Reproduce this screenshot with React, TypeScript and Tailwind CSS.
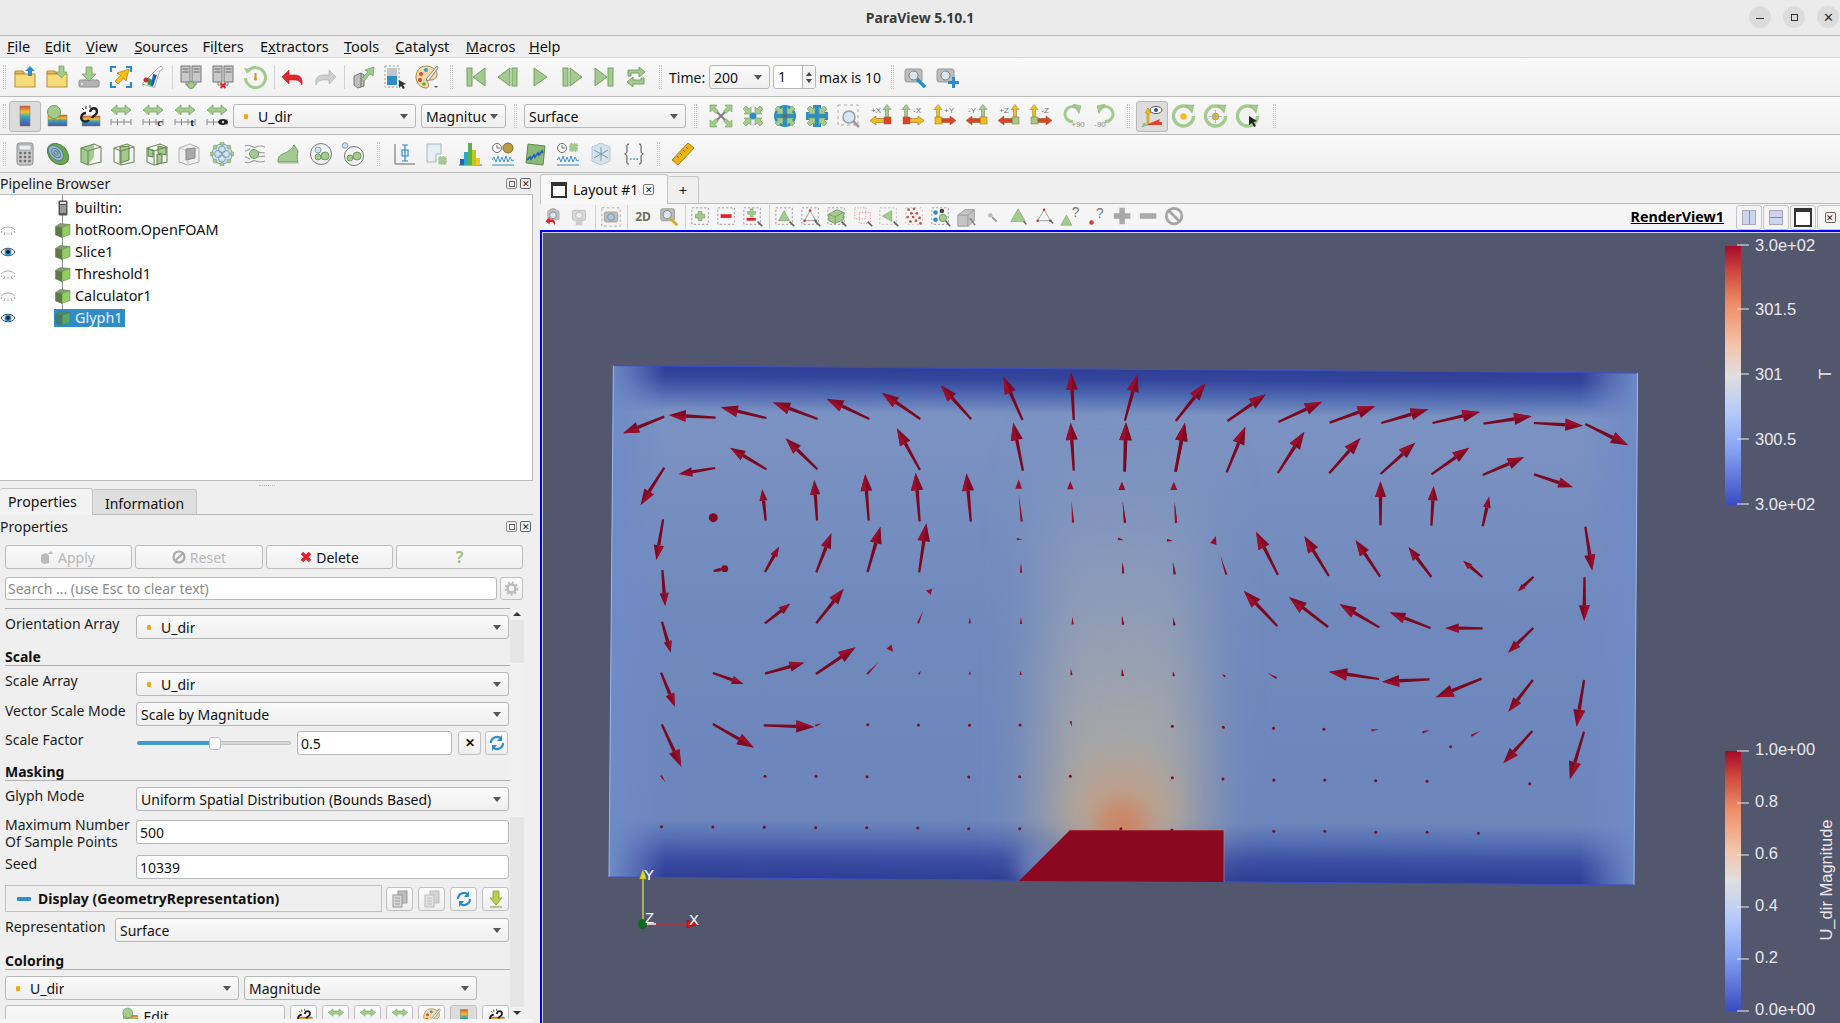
import React from "react";

const G = "#a3cb8f", GS = "#6f9a5d", Y = "#f4bd1c", R = "#e1402b", B = "#2a8cc8", GD = "#7d7d7d";

const Ic = ({ children, s = 24 }: { children?: React.ReactNode; s?: number }) => (
  <svg width={s} height={s} viewBox="0 0 24 24" className="block shrink-0">{children}</svg>
);

const Folder = () => (
  <g>
    <path d="M2 9V6h8l2 3z" fill="#e5b85c" stroke="#b98a3e" />
    <rect x="2" y="9" width="20" height="13" fill="#f6dc78" stroke="#b98a3e" />
  </g>
);
const OpenI = () => <Ic><Folder /><path d="M15 11V6h-3l5-5 5 5h-3v5z" fill={B} /></Ic>;
const LoadI = () => <Ic><Folder /><path d="M14 1h5v6h3l-5.500 6L11 7h3z" fill={G} stroke={GS} strokeWidth=".7" /></Ic>;
const SaveI = () => <Ic><rect x="2" y="15" width="20" height="7" rx="1.500" fill="#b3b3b3" stroke="#8c8c8c" /><circle cx="5" cy="19" r="1" fill="#eee" /><path d="M9 2h6v7h4l-7 7-7-7h4z" fill={G} stroke={GS} strokeWidth=".7" /></Ic>;
const CamI = () => <Ic>
  <path d="M2 7V2h5M17 2h5v5M2 17v5h5M17 22h5v-5" fill="none" stroke={B} strokeWidth="2.200" />
  <path d="M20 4l-3 12-2.500-3L9 19l-3-3 5.500-5.500L8 8z" fill={Y} stroke="#a77c12" strokeWidth=".7" />
</Ic>;
const FlaskI = () => <Ic>
  <path d="M16 4l4-3 2 2.500-3.500 3-5 16L1 19z" fill="#fff" stroke="#aaa" />
  <path d="M7 13l5 2-1.500 6-4-1.500z" fill="#1f9a4e" /><path d="M12 9l4 1-4 11.500-2-.8z" fill="#1f5fb0" /><circle cx="5" cy="15" r="2.500" fill="#c9302c" />
</Ic>;
const Serv = ({ x = 3 }: { x?: number }) => (
  <g>
    <rect x={x} y="1" width="9" height="16" fill="#c9c9c9" stroke="#777" />
    <path d={`M${x + 1.500} 4h6M${x + 1.500} 7h6`} stroke="#666" />
  </g>
);
const ConnI = ({ bad }: { bad?: boolean }) => <Ic>
  <Serv x={2} /><Serv x={13} />
  <path d="M7 17v3h10v-3" fill="none" stroke="#777" />
  {bad ? <path d="M9.500 18l5 5m0-5l-5 5" stroke="#d92b2b" strokeWidth="2" /> : <circle cx="12" cy="20" r="3.500" fill={G} stroke={GS} />}
</Ic>;
const TimerI = () => <Ic>
  <path d="M5 6a10 10 0 1 1-2.500 7" fill="none" stroke={G} strokeWidth="3" />
  <path d="M1 3l7 1-4 5z" fill={G} />
  <circle cx="12.500" cy="13" r="6.500" fill="#f4f4f4" />
  <path d="M12.500 8v5" stroke="#c79a1b" strokeWidth="2" /><circle cx="12.500" cy="14" r="1.500" fill="#c79a1b" />
</Ic>;
const UndoI = ({ c = "#e3262c", flip }: { c?: string; flip?: boolean }) => <Ic>
  <g transform={flip ? "translate(24,0) scale(-1,1)" : undefined}>
    <path d="M8 10h6c5 0 8 3 7 10-2-4-4-5-8-5H8v4L1 12l7-7z" fill={c} stroke={flip ? "#aaa" : "#c21a1f"} strokeWidth=".6" />
  </g>
</Ic>;
const FindI = () => <Ic>
  <path d="M3 11l7-3 3 2v11l-6 2-4-3z" fill="#bdbdbd" stroke="#777" /><path d="M10 8v14" stroke="#777" />
  <path d="M10 14L17 7l-3-2 9-3-1 9-3-2-6 7z" fill={G} stroke={GS} strokeWidth=".7" />
</Ic>;
const Rainbow = () => (
  <linearGradient id="rb" x1="0" y1="0" x2="0" y2="1">
    <stop offset="0" stopColor="#d94f2a" /><stop offset=".3" stopColor="#f2c32b" /><stop offset=".55" stopColor="#2aa3c9" /><stop offset="1" stopColor="#5a4a9c" />
  </linearGradient>
);
const RescaleI = () => <Ic>
  <rect x="2" y="1" width="14" height="21" fill="none" stroke="#999" strokeDasharray="2 2" />
  <rect x="4" y="3" width="10" height="8" fill="#c4c4c4" /><rect x="4" y="11" width="10" height="9" fill="#2a8cc8" />
  <path d="M16 15l7 4-3 1 2 3-2 1-2-3-2 2z" fill="#333" />
</Ic>;
const PaletteI = () => <Ic>
  <path d="M11 1C4 1 1 7 1 12s4 11 10 11c3 0 3-3 2-5s0-3 3-3 6-2 6-6-5-8-11-8z" fill="#f3d9a6" stroke="#a78a55" />
  <circle cx="6" cy="9" r="2" fill="#d94f2a" /><circle cx="11" cy="5" r="2" fill="#3a9ad9" /><circle cx="5" cy="15" r="2" fill="#e0402f" /><circle cx="9" cy="19" r="1.800" fill="#58a845" />
  <path d="M22 1l1 2-9 12-3 1 1-3z" fill="#f0f0f0" stroke="#888" /><path d="M19 21h4l-2 2z" fill="#555" />
</Ic>;
const VC = ({ k }: { k: string }) => {
  const st = { fill: G, stroke: GS, strokeWidth: 0.9 };
  if (k === "first") return <Ic><rect x="3" y="3" width="5" height="18" {...st} /><path d="M21 3v18L9 12z" {...st} /></Ic>;
  if (k === "prev") return <Ic><path d="M14 3v18L2 12z" {...st} /><rect x="16" y="3" width="5" height="18" {...st} /></Ic>;
  if (k === "play") return <Ic><path d="M6 3v18l13-9z" {...st} /></Ic>;
  if (k === "next") return <Ic><rect x="3" y="3" width="5" height="18" {...st} /><path d="M10 3v18l12-9z" {...st} /></Ic>;
  if (k === "last") return <Ic><path d="M3 3v18l12-9z" {...st} /><rect x="16" y="3" width="5" height="18" {...st} /></Ic>;
  return <Ic><path d="M4 11V5h11V2l6 5-6 5V8H7v3z" {...st} /><path d="M20 13v6H9v3l-6-5 6-5v3h8v-2z" {...st} /></Ic>;
};
const BarI = () => <Ic>
  <defs><Rainbow /></defs>
  <rect x="7" y="2" width="10" height="20" fill="url(#rb)" stroke="#888" strokeWidth=".7" />
</Ic>;
const BarBallI = () => <Ic>
  <rect x="3" y="11" width="19" height="11" fill="url(#rb)" stroke="#888" strokeWidth=".6" />
  <path d="M3 16h19M9 11v11M15 11v11" stroke="#66666688" strokeWidth=".6" />
  <circle cx="9" cy="8" r="6.500" fill={G} stroke={GS} />
</Ic>;
const LinkI = () => <Ic>
  <rect x="5" y="12" width="18" height="10" fill="url(#rb)" stroke="#888" strokeWidth=".6" />
  <path d="M13 8c1-5 7-5 7 0 0 3-4 3-5 6" fill="none" stroke="#222" strokeWidth="2.400" />
  <path d="M9 9c-4 0-6 4-4 7 2 2 5 2 7 0" fill="none" stroke="#222" strokeWidth="2.400" />
  <path d="M9 2v3M5 4l2 2M13 1v3" stroke="#222" />
</Ic>;
const RulerI = ({ t }: { t?: string }) => <Ic>
  <path d="M2 6l6-5v3h8V1l6 5-6 5V8H8v3z" fill={G} stroke={GS} strokeWidth=".7" />
  <path d="M2 18h20M2 15v6M8.500 15v6M15 15v6M22 15v6" stroke="#888" />
  {t === "eye" ? <g><ellipse cx="18" cy="18" rx="5" ry="3" fill="#222" /><circle cx="18" cy="18" r="1.200" fill="#ddd" /></g> : null}
  {t && t !== "eye" ? <text x="19" y="22" fontSize="11" fontWeight="700" fontStyle={t === "c" ? "italic" : "normal"} textAnchor="middle" fill="#222" fontFamily="Liberation Serif, serif">{t}</text> : null}
</Ic>;
const Ar4 = ({ inward, c = G }: { inward?: boolean; c?: string }) => {
  const p = inward
    ? "M10 10L3 10l2-2-3-3 3-3 3 3 2-2z"
    : "M1 1h7L6 3.500 9.500 7 7 9.500 3.500 6 1 8z";
  return (
    <g fill={c} stroke={GS} strokeWidth=".6">
      <path d={p} />
      <path d={p} transform="translate(24,0) scale(-1,1)" />
      <path d={p} transform="translate(0,24) scale(1,-1)" />
      <path d={p} transform="translate(24,24) scale(-1,-1)" />
    </g>
  );
};
const ResetI = ({ k }: { k: number }) => <Ic>
  {k === 0 ? <path d="M5 5l14 14M19 5L5 19" stroke={GD} strokeWidth="2" /> : null}
  {k === 1 ? <circle cx="12" cy="12" r="3.500" fill={B} /> : null}
  {k === 2 ? <circle cx="12" cy="12" r="11" fill={B} /> : null}
  {k === 3 ? <path d="M8 1h8v7h7v8h-7v7H8v-7H1V8h7z" fill={B} /> : null}
  {k === 2 ? <path d="M8 8l8 8m0-8l-8 8" stroke="#666" strokeWidth="1.500" /> : null}
  <Ar4 inward={k !== 0} />
</Ic>;
const ZoomBoxI = () => <Ic>
  <rect x="1" y="1" width="20" height="20" fill="none" stroke="#aaa" strokeDasharray="3 3" />
  <circle cx="12" cy="13" r="6" fill="#d6e6f4" stroke="#9a9a9a" strokeWidth="1.500" /><path d="M16 17l6 6" stroke="#9a9a9a" strokeWidth="2.500" />
</Ic>;
const AxisI = ({ label, right, up, sq, side }: { label: string; right?: boolean; up: string; sq: string; side: string }) => {
  const ux = right ? 18 : 5;
  return <Ic>
    <path d={`M${ux - 1.500} 13V5.500h-2.500l4-5 4 5h-2.500V13z`} fill={up} stroke="#7c7c5a" strokeWidth=".5" />
    <rect x={ux - 3} y="13" width="7" height="7" fill={sq} stroke="#8a6a1f" strokeWidth=".5" />
    {right
      ? <path d="M15 14.500H7v-2.500L1 16.500 7 21v-2.500h8z" fill={side} stroke="#7c5a1a" strokeWidth=".5" />
      : <path d="M9 14.500h8v-2.500l6 4.500-6 4.500v-2.500H9z" fill={side} stroke="#7c5a1a" strokeWidth=".5" />}
    <text x={right ? 7 : 16} y="9" fontSize="8" textAnchor="middle" fill="#6f6f6f" fontFamily="Liberation Sans, sans-serif">{label}</text>
  </Ic>;
};
const RotI = ({ plus }: { plus?: boolean }) => <Ic>
  <g transform={plus ? undefined : "translate(24,0) scale(-1,1)"}>
    <path d="M16 4a7.500 7.500 0 1 0-4 13.500" fill="none" stroke={G} strokeWidth="3" />
    <path d="M12 0l8 2-2 7.500z" fill={G} stroke={GS} strokeWidth=".4" />
  </g>
  <text x={plus ? 17 : 7} y="23" fontSize="8" textAnchor="middle" fill="#8a8a8a" fontFamily="Liberation Sans, sans-serif">{plus ? "+90" : "-90"}</text>
</Ic>;
const AxEyeI = () => <Ic>
  <path d="M7 21V9H5l3-5 3 5H9v12z" fill={Y} stroke="#9a7a1a" strokeWidth=".5" />
  <path d="M8 20l12-5-1 3h3v3H8z" fill={R} />
  <path d="M7 21l-5 2 2-4z" fill={G} stroke={GS} strokeWidth=".5" />
  <ellipse cx="16" cy="6" rx="6" ry="3.500" fill="#fff" stroke="#555" /><circle cx="16" cy="6" r="2" fill="#334a88" />
</Ic>;
const CenterI = ({ k }: { k: number }) => <Ic>
  <path d="M19.500 6a10 10 0 1 0 2 6" fill="none" stroke={G} strokeWidth="3.400" />
  <path d="M14 1l8 0-2 8z" fill={G} stroke={GS} strokeWidth=".4" />
  <circle cx="11.500" cy="12.500" r="7" fill="#f2f2f2" />
  {k < 2 ? <circle cx="11.500" cy="12.500" r="3.200" fill={Y} stroke={k === 1 ? "#999" : "none"} /> : null}
  {k === 1 ? <path d="M11.500 6v13M5 12.500h13" stroke="#aaa" strokeWidth=".8" /> : null}
  {k === 2 ? <path d="M13 12l8 5-3.500 1 2.500 4-2 1-2-4-3 2z" fill="#222" /> : null}
</Ic>;
const SearchCam = ({ plus }: { plus?: boolean }) => <Ic>
  <rect x="2" y="4" width="17" height="13" rx="2" fill="#bcbcbc" stroke="#999" />
  <circle cx="10.500" cy="10.500" r="4.500" fill="#d8e6f0" stroke="#7f7f7f" />
  {plus ? <path d="M17 12v4h-4v3h4v4h3v-4h4v-3h-4v-4z" fill={B} /> : <path d="M14 14l8 8" stroke={B} strokeWidth="3.500" />}
</Ic>;
// toolbar 3
const CalcI = () => <Ic>
  <rect x="4" y="1" width="16" height="22" rx="2.500" fill="#c9c9c9" stroke="#8b8b8b" />
  <rect x="6" y="3" width="12" height="5" fill="#e8f0f4" stroke="#888" strokeWidth=".6" />
  {[7.500, 12, 16.500].map((x) => [11, 15, 19].map((y) => <rect key={`${x}${y}`} x={x - 1.200} y={y - 1.200} width="2.400" height="2.400" fill="#6e6e6e" />))}
</Ic>;
const ContourI = () => <Ic>
  <ellipse cx="12" cy="12" rx="12" ry="9" transform="rotate(45 12 12)" fill="#6aa84f" stroke="#4f7f3a" />
  <ellipse cx="10" cy="11" rx="9" ry="6" transform="rotate(45 10 11)" fill="#93b7c9" stroke="#5a7f8f" />
  <ellipse cx="10" cy="11" rx="5.500" ry="3.500" transform="rotate(45 10 11)" fill="none" stroke="#5a7f8f" />
  <ellipse cx="10" cy="11" rx="2.500" ry="1.500" transform="rotate(45 10 11)" fill="none" stroke="#5a7f8f" />
</Ic>;
const Box = ({ c = "#6f8a5a" }: { c?: string }) => (
  <g fill="none" stroke={c} strokeWidth="1.100">
    <path d="M2 6l13-4 7 3v15l-13 3-7-3z" />
    <path d="M2 6l7 3v14M9 9l13-4" />
  </g>
);
const ClipI = () => <Ic><path d="M2 6l13-4v13l-6 8-7-3z" fill={G} /><Box /></Ic>;
const SliceI = () => <Ic><path d="M8 5l9-1v14l-9 3z" fill={G} stroke="#5f7f4a" /><Box /></Ic>;
const ThreshI = () => <Ic><path d="M3 7l5 1v7l-5-1zM13 4l8 2v7l-8-2zM12 12l5 1v8l-5 1z" fill={G} stroke="#5f7f4a" /><Box /></Ic>;
const ExtractI = () => <Ic>
  <path d="M2 6l11-4 9 4v14l-11 3-9-3z" fill="#efefef" stroke="#b0b0b0" />
  <path d="M2 6l9 3 11-3M11 9v14" fill="none" stroke="#c4c4c4" />
  <path d="M9 7l9-1v10l-9 2z" fill="#a9a9a9" stroke="#888" />
</Ic>;
const GlyphNetI = () => <Ic>
  <circle cx="12" cy="12" r="10" fill="#cfe0ee" stroke="#7f9fb7" />
  <circle cx="8" cy="12" r="3.500" fill="none" stroke="#7f9fb7" /><circle cx="16" cy="12" r="3.500" fill="none" stroke="#7f9fb7" />
  <circle cx="12" cy="7.500" r="3.500" fill="none" stroke="#7f9fb7" /><circle cx="12" cy="16.500" r="3.500" fill="none" stroke="#7f9fb7" />
  {[[12, 1.500], [12, 22.500], [1.500, 12], [22.500, 12], [5, 5], [19, 5], [5, 19], [19, 19]].map(([x, y]) => <circle key={`${x}${y}`} cx={x} cy={y} r="2" fill={G} stroke={GS} strokeWidth=".5" />)}
</Ic>;
const StreamI = () => <Ic>
  <circle cx="11" cy="12" r="4.500" fill={G} stroke={GS} />
  <path d="M2 4c5-3 7 3 11 1s6-1 9 0M2 9c3 0 3-2 5-2M15 10c2 1 4 0 7 1M2 15c3 0 3 2 5 2M15 15c2-1 4 0 7-1M2 20c5 3 7-3 11-1s6 1 9 0" fill="none" stroke="#9a9a9a" strokeWidth="1.100" />
</Ic>;
const WarpI = () => <Ic>
  <path d="M2 20c0-6 2-7 7-9 4-2 7-4 9-8l4 6c-1 3-1 8 0 11z" fill={G} stroke={GS} />
  <path d="M2 21h21" stroke="#aabbaa" />
</Ic>;
const GroupI = () => <Ic>
  <circle cx="12" cy="12" r="10.500" fill="#f4f4f4" stroke="#777" />
  <circle cx="9" cy="8" r="3" fill="#cfe0ee" stroke="#7f9fb7" /><circle cx="9" cy="15" r="3" fill={G} stroke={GS} /><circle cx="16" cy="14" r="4" fill={G} stroke={GS} />
</Ic>;
const UngroupI = () => <Ic>
  <circle cx="13" cy="14" r="9.500" fill="#f4f4f4" stroke="#777" />
  <circle cx="4" cy="3.500" r="2.800" fill="#cfe0ee" stroke="#7f9fb7" /><circle cx="9" cy="16" r="3" fill={G} stroke={GS} /><circle cx="16" cy="14" r="4" fill={G} stroke={GS} />
</Ic>;
const PlotOverI = () => <Ic>
  <path d="M3 2v20h20" fill="none" stroke="#666" />
  <path d="M13 3v16M10 8h6v6h-6zM10 19h6M10 3h6" fill="none" stroke={B} strokeWidth="1.200" />
</Ic>;
const SelI = () => <Ic>
  <path d="M2 2h14v10h-5v8H2z" fill="#e6eff6" stroke="#aab4bc" />
  <rect x="13" y="14" width="9" height="9" fill={G} stroke="#fff" strokeDasharray="2 1" />
</Ic>;
const HistI = () => <Ic>
  <path d="M1 23h23" stroke="#666" />
  <rect x="2" y="17" width="4" height="6" fill="#2b5fb3" /><rect x="6" y="10" width="4" height="13" fill="#2ea8c9" /><rect x="10" y="1" width="4" height="22" fill="#57b04a" /><rect x="14" y="8" width="4" height="15" fill="#b7c92c" /><rect x="18" y="16" width="4" height="7" fill="#f4c91f" />
</Ic>;
const TimeBallI = () => <Ic>
  <circle cx="6" cy="6" r="4.500" fill="#fff" stroke="#666" /><path d="M6 3v3h3" stroke="#666" fill="none" />
  <circle cx="17" cy="6" r="5" fill="#bf9a45" stroke="#806a30" />
  <path d="M1 18l2-3 2 5 2-6 2 6 2-5 2 5 2-6 2 6 2-5 2 4 2-1" fill="none" stroke={B} strokeWidth=".9" /><path d="M1 23h22" stroke={B} />
</Ic>;
const LineHistI = () => <Ic>
  <path d="M5 2l17 2-2 19-17-2z" fill="#8cb878" stroke="#5f8a4c" />
  <path d="M4 18l3-3 1 2 3-4 1 2 3-4 1 2 3-4 1 2" fill="none" stroke="#2364b0" strokeWidth="1.800" />
</Ic>;
const TimeSelI = () => <Ic>
  <circle cx="6" cy="6" r="4.500" fill="#fff" stroke="#666" /><path d="M6 3v3h3" stroke="#666" fill="none" />
  <rect x="13" y="1" width="9" height="9" fill={G} stroke="#fff" strokeDasharray="2 1" />
  <path d="M1 18l2-3 2 5 2-6 2 6 2-5 2 5 2-6 2 6 2-5 2 4 2-1" fill="none" stroke={B} strokeWidth=".9" /><path d="M1 23h22" stroke={B} />
</Ic>;
const IceI = () => <Ic>
  <path d="M3 5l9-4 9 4v14l-9 4-9-4z" fill="#d3e3ef" stroke="#b5c7d4" />
  <path d="M12 5v14M5 8l14 8M19 8L5 16" stroke="#7f96a7" />
</Ic>;
const BraceI = () => <Ic>
  <path d="M7 2c-3 0-2 3-2 7 0 2-2 3-2 3s2 1 2 3c0 4-1 7 2 7M17 2c3 0 2 3 2 7 0 2 2 3 2 3s-2 1-2 3c0 4 1 7-2 7" fill="none" stroke="#777" strokeWidth="1.300" />
  <path d="M8 17h1.500M11.200 17h1.500M14.400 17H16" stroke="#5aa7d6" strokeWidth="2" />
</Ic>;
const RulerMeasI = () => <Ic>
  <path d="M17 1l6 5L7 23l-6-5z" fill="#e8b317" stroke="#a67f10" />
  <path d="M15 5l2 2M12 8l2 2M9 11l2 2M6 14l2 2" stroke="#8a6a10" />
</Ic>;
// view toolbar
const Dash = ({ c = "#999" }: { c?: string }) => <rect x="2" y="2" width="18" height="18" fill="none" stroke={c} strokeDasharray="2.500 2" />;
const Cursor = () => <path d="M17 17l5 5" stroke="#666" strokeWidth="1.800" />;
const VIcon = ({ k }: { k: string }) => {
  const tri = <path d="M11 5l6 11H5z" fill={G} stroke={GS} strokeWidth=".6" />;
  const triDots = <g><path d="M11 5L5 16h12z" fill="none" stroke="#999" /><circle cx="11" cy="5" r="1.400" fill="#c0392b" /><circle cx="5" cy="16" r="1.400" fill="#c0392b" /><circle cx="17" cy="16" r="1.400" fill="#555" /></g>;
  switch (k) {
    case "a": return <Ic s={20}><circle cx="12" cy="8" r="6" fill="#bbb" stroke="#999" /><rect x="5" y="4" width="15" height="12" rx="2" fill="#bcbcbc" /><circle cx="12" cy="10" r="4" fill="#d8e6f0" stroke="#888" /><path d="M3 17l5-5v3h3c3 0 4 3 3 7-1-3-2-4-4-4H8v3z" fill="#e02020" /></Ic>;
    case "b": return <Ic s={20}><rect x="4" y="4" width="16" height="12" rx="2" fill="#d8d8d8" stroke="#bbb" /><circle cx="12" cy="10" r="4" fill="#eee" stroke="#bbb" /><path d="M8 17h8v5H8z" fill="#ccc" /></Ic>;
    case "c": return <Ic s={20}><rect x="1" y="1" width="22" height="22" fill="none" stroke="#999" strokeDasharray="3 3" /><rect x="4" y="6" width="16" height="12" rx="2" fill="#bcbcbc" stroke="#999" /><circle cx="12" cy="12" r="4" fill="#a8cbe8" stroke="#888" /></Ic>;
    case "e": return <Ic s={22}><rect x="3" y="3" width="15" height="13" rx="2" fill="#bcbcbc" stroke="#999" /><circle cx="10" cy="9.500" r="4.500" fill="#d8e6f0" stroke="#7f7f7f" /><path d="M13 13l8 8" stroke="#d4ab2a" strokeWidth="3" /></Ic>;
    case "plus": return <Ic s={22}><Dash /><path d="M9 6h4v3h3v4h-3v3H9v-3H6V9h3z" fill={G} stroke={GS} strokeWidth=".7" /></Ic>;
    case "minus": return <Ic s={22}><Dash /><rect x="5" y="9" width="12" height="4" fill="#e0202a" /></Ic>;
    case "pm": return <Ic s={22}><Dash /><path d="M9 3h3v3h3v3h-3v3H9V9H6V6h3z" fill={G} stroke={GS} strokeWidth=".5" /><rect x="5" y="13" width="10" height="3" fill="#e0202a" /><Cursor /></Ic>;
    case "t1": return <Ic s={22}><Dash />{tri}<Cursor /></Ic>;
    case "t2": return <Ic s={22}><Dash />{triDots}<Cursor /></Ic>;
    case "t3": return <Ic s={22}><Dash /><path d="M3 9l9-5 7 3v8l-9 4-7-3z" fill={G} stroke={GS} /><path d="M3 9l7 3 9-5M10 12v7" stroke={GS} fill="none" /><Cursor /></Ic>;
    case "t4": return <Ic s={22}><rect x="3" y="2" width="12" height="12" fill="none" stroke="#e29a8e" strokeDasharray="1.500 1.500" /><rect x="8" y="7" width="12" height="12" fill="none" stroke="#e29a8e" strokeDasharray="1.500 1.500" /><Cursor /></Ic>;
    case "t5": return <Ic s={22}><Dash c="#bbb" /><path d="M15 5v12L5 11z" fill={G} stroke={GS} strokeWidth=".6" /><Cursor /></Ic>;
    case "t6": return <Ic s={22}>{[[5, 4], [11, 3], [8, 8], [14, 8], [4, 12], [10, 12], [17, 13], [7, 17], [13, 16], [18, 19]].map(([x, y]) => <circle key={`${x}${y}`} cx={x} cy={y} r="1.500" fill="#b9574c" />)}<rect x="2" y="2" width="18" height="18" fill="none" stroke="#bbb" strokeDasharray="2 3" /></Ic>;
    case "t7": return <Ic s={22}><Dash /><circle cx="6" cy="7" r="2.500" fill={B} /><circle cx="13" cy="5.500" r="2.500" fill="#444" /><circle cx="6" cy="15" r="2.500" fill={B} /><circle cx="14" cy="13" r="4" fill={G} stroke={GS} /><path d="M17 16l5 6" stroke="#666" strokeWidth="1.800" /></Ic>;
    case "t8": return <Ic s={22}><path d="M2 10l8-6h10v12l-7 6H2z" fill="#c5c5c5" stroke="#999" /><path d="M2 10h11v12M13 10l7-6" stroke="#999" fill="none" /><path d="M15 13l6 8" stroke="#888" strokeWidth="1.800" /></Ic>;
    case "p1": return <Ic s={22}><circle cx="9" cy="10" r="2.500" fill="#bbb" /><path d="M11 12l5 5" stroke="#999" strokeWidth="2" /></Ic>;
    case "p2": return <Ic s={22}><path d="M11 3l8 14H3z" fill={G} stroke={GS} strokeWidth=".6" /><path d="M17 17l3 3" stroke="#666" strokeWidth="1.500" /></Ic>;
    case "p3": return <Ic s={22}><path d="M11 4L4 16h14z" fill="none" stroke="#999" /><circle cx="11" cy="4" r="1.400" fill="#c0392b" /><circle cx="4" cy="16" r="1.400" fill="#c0392b" /><circle cx="18" cy="16" r="1.400" fill="#555" /><path d="M18 16l3 3" stroke="#666" strokeWidth="1.500" /></Ic>;
    case "q1": return <Ic s={22}><path d="M7 10l6 11H1z" fill={G} stroke={GS} strokeWidth=".6" /><text x="17" y="12" fontSize="15" textAnchor="middle" fill="#777" fontFamily="Liberation Sans, sans-serif">?</text></Ic>;
    case "q2": return <Ic s={22}><circle cx="6" cy="18" r="2.500" fill="#d83a2a" /><text x="15" y="13" fontSize="15" textAnchor="middle" fill="#777" fontFamily="Liberation Sans, sans-serif">?</text></Ic>;
    case "g+": return <Ic s={22}><path d="M8 2h6v6h6v6h-6v6H8v-6H2V8h6z" fill="#a9a9a9" /></Ic>;
    case "g-": return <Ic s={22}><rect x="2" y="8" width="18" height="6" rx="1" fill="#a9a9a9" /></Ic>;
    default: return <Ic s={22}><circle cx="11" cy="11" r="8.500" fill="none" stroke="#a5a5a5" strokeWidth="3" /><path d="M5 5l12 12" stroke="#a5a5a5" strokeWidth="3" /></Ic>;
  }
};

const Grip = ({ cls = "w-[9px]" }: { cls?: string }) => (
  <div className={`${cls} h-[24px] shrink-0 flex justify-center`}>
    <div className="w-[3px] h-full border-x border-dotted border-[#c2c2c2]" />
  </div>
);
const S32 = ({ children, on }: { children?: React.ReactNode; on?: boolean }) => (
  <div className="w-[32px] h-[32px] shrink-0 flex items-center justify-center">
    {on ? <div className="w-[32px] h-[31px] rounded-[3px] border border-[#b9b9b9] bg-[#dcdcdc] flex items-center justify-center">{children}</div> : children}
  </div>
);
const S33 = ({ children }: { children?: React.ReactNode }) => (
  <div className="w-[32.8px] h-[32px] shrink-0 flex items-center justify-center">{children}</div>
);
const V26 = ({ k }: { k: string }) => <div className="w-[26px] h-[22px] shrink-0 flex items-center justify-center"><VIcon k={k} /></div>;
const Sep = ({ cls = "w-[6px]" }: { cls?: string }) => (
  <div className={`${cls} h-[24px] shrink-0 flex justify-center`}><div className="w-px h-full bg-[#d2d2d2]" /></div>
);
const Caret = () => <span className="ml-auto w-0 h-0 border-x-[4px] border-x-transparent border-t-[5px] border-t-[#555] shrink-0" />;
const Dot = () => <span className="w-[4px] h-[5px] rounded-[1px] bg-[#f0a818] shrink-0" />;
const Combo = ({ text, cls, dot, textCls = "" }: { text: string; cls: string; dot?: boolean; textCls?: string }) => (
  <div className={`${cls} h-[24px] shrink-0 rounded-[3px] border border-[#b7b7b7] bg-linear-to-b from-[#fbfbfb] to-[#efefef] flex items-center pl-[4px] pr-[7px] overflow-hidden whitespace-nowrap text-[14px] text-[#111]`}>
    {dot ? <><span className="w-[6px] shrink-0" /><Dot /><span className="w-[10px] shrink-0" /></> : null}
    <span className={`overflow-hidden ${textCls}`}>{text}</span>
    <Caret />
  </div>
);
const Field = ({ text, cls }: { text: string; cls: string }) => (
  <div className={`${cls} h-[24px] shrink-0 rounded-[3px] border border-[#b7b7b7] bg-white flex items-center pl-[3px] text-[14px] text-[#111]`}>{text}</div>
);
const Label = ({ children, cls = "w-[131px]" }: { children?: React.ReactNode; cls?: string }) => (
  <div className={`${cls} shrink-0 leading-[18px] text-[14px] text-[#1c1c1c] whitespace-nowrap`}>{children}</div>
);
const Head = ({ text, cls }: { text: string; cls: string }) => (
  <div className={`${cls} shrink-0 border-b border-[#b0b0b0] flex items-end font-bold text-[14px] leading-[16px] text-[#111]`}>{text}</div>
);
const SmallBtn = ({ children, cls = "w-[27px]" }: { children?: React.ReactNode; cls?: string }) => (
  <div className={`${cls} h-[24px] shrink-0 rounded-[3px] border border-[#c0c0c0] bg-linear-to-b from-[#fbfbfb] to-[#eeeeee] flex items-center justify-center`}>{children}</div>
);
const Float = () => (
  <div className="flex gap-[3px] items-center">
    <div className="w-[11px] h-[11px] rounded-[2px] border border-[#888] flex items-center justify-center"><div className="w-[6px] h-[6px] border border-[#666]" /></div>
    <div className="w-[11px] h-[11px] rounded-[2px] border border-[#666] flex items-center justify-center text-[9px] leading-none text-[#222]">✕</div>
  </div>
);

const Cube = ({ dim }: { dim?: boolean }) => (
  <svg width="16" height="15" viewBox="0 0 16 15" className="block shrink-0">
    <path d="M.5 3.500L5 .5l10 1-8 3z" fill={dim ? "#4d8a64" : "#84a06c"} />
    <path d="M.5 3.500L7 4.500v10L.5 12z" fill={dim ? "#3f7a70" : "#5f7a48"} />
    <path d="M7 4.500l8-3v10l-8 3z" fill={dim ? "#5aa860" : "#92cf62"} />
    <path d="M.5 3.500L5 .5l10 1v10l-8 3L.5 12zM.5 3.500L7 4.500l8-3M7 4.500v10" fill="none" stroke={dim ? "#3b7a70" : "#5a7048"} strokeWidth=".5" />
  </svg>
);
const Eye = ({ on }: { on?: boolean }) => (
  <svg width="16" height="12" viewBox="0 0 16 12" className="block shrink-0">
    {on ? (
      <g>
        <path d="M1 6c3-5 11-5 14 0-3 5-11 5-14 0z" fill="#fff" stroke="#444" />
        <circle cx="8" cy="6" r="3.500" fill="#2b8fd0" /><circle cx="8" cy="6" r="1.800" fill="#111" />
      </g>
    ) : (
      <path d="M1 6c3-4 11-4 14 0M2 7l-1 2M5 8l-1 3M8 8.500V11M11 8l1 3M14 7l1 2" fill="none" stroke="#aaa" />
    )}
  </svg>
);
const TreeRow = ({ name, eye, sel, srv }: { name: string; eye?: "on" | "off"; sel?: boolean; srv?: boolean }) => (
  <div className="h-[22px] flex items-center relative">
    <div className="w-[16px] flex justify-center">{eye ? <Eye on={eye === "on"} /> : null}</div>
    <div className="w-[38px] shrink-0" />
    <div className={`flex items-center h-[18px] pl-[1px] pr-[2px] ${sel ? "bg-[#308cc6] text-[#eaf4fb]" : "text-[#111]"}`}>
      <div className="w-[16px] flex justify-center">
        {srv ? (
          <svg width="10" height="16" viewBox="0 0 10 16" className="block"><rect x=".5" y=".5" width="9" height="15" rx="1" fill="#555" /><rect x="2" y="2" width="6" height="2" fill="#ddd" /><rect x="2" y="5" width="6" height="8" fill="#999" /></svg>
        ) : <Cube dim={sel} />}
      </div>
      <span className="ml-[4px] text-[14.400px] leading-[18px] whitespace-nowrap">{name}</span>
    </div>
  </div>
);

// ---- render view ----
type A = [number, number, number, number];
const z7 = (a: number[]) => [600 + a[0] * 0.3827, 350 + a[1] / 3, 600 + a[2] * 0.3827, 350 + a[3] / 3];
const z8 = (a: number[]) => [1100 + a[0] * 0.3827, 350 + a[1] / 3, 1100 + a[2] * 0.3827, 350 + a[3] / 3];
const z9 = (a: number[]) => [580 + a[0] * 0.3954, 680 + a[1] / 3, 580 + a[2] * 0.3954, 680 + a[3] / 3];
const z10 = (a: number[]) => [1180 + a[0] * 0.4209, 680 + a[1] / 3, 1180 + a[2] * 0.4209, 680 + a[3] / 3];

const arrows7: A[] = [
  [168, 200, 60, 250], [302, 203, 180, 195], [435, 204, 316, 172], [569, 207, 452, 157], [704, 207, 592, 146], [837, 207, 737, 128], [970, 208, 891, 106], [1104, 210, 1054, 80], [1238, 210, 1231, 68],
  [168, 353, 106, 465], [301, 354, 206, 372], [435, 358, 340, 293], [568, 358, 485, 265], [836, 360, 776, 235], [1105, 362, 1080, 218], [1238, 362, 1230, 218], [1370, 365, 1375, 218], [1503, 365, 1528, 220],
  [433, 512, 424, 418], [567, 512, 560, 390], [702, 512, 693, 372], [835, 514, 825, 368], [969, 515, 958, 370],
  [165, 508, 147, 630], [297, 663, 325, 656], [431, 666, 468, 590], [565, 667, 605, 550], [699, 666, 733, 530], [834, 667, 853, 520],
  [163, 660, 170, 768], [431, 820, 497, 761], [565, 820, 637, 716],
  [162, 815, 185, 908], [295, 969, 375, 1002], [431, 971, 534, 938], [564, 972, 668, 892],
];
const arrows8: A[] = [
  [65, 212, 98, 74], [198, 213, 276, 100], [333, 213, 434, 133], [466, 216, 581, 155], [600, 218, 719, 169], [735, 219, 858, 178], [869, 219, 993, 186], [1002, 221, 1128, 199], [1134, 219, 1262, 227], [1268, 222, 1380, 286],
  [65, 365, 68, 217], [198, 365, 222, 218], [331, 367, 380, 230], [465, 369, 534, 245], [599, 370, 681, 264], [733, 372, 824, 278], [866, 373, 965, 293], [1000, 375, 1108, 322], [1134, 373, 1236, 412],
  [733, 526, 733, 393], [866, 527, 872, 408], [1000, 529, 1017, 440], [1268, 530, 1286, 662],
  [465, 675, 408, 545], [598, 678, 534, 558], [732, 680, 668, 570], [866, 681, 806, 591], [999, 681, 949, 632], [1133, 680, 1092, 724],
  [463, 828, 376, 722], [596, 831, 494, 741], [730, 832, 626, 762], [864, 834, 757, 787], [1000, 835, 902, 834], [1132, 834, 1066, 908], [1266, 682, 1265, 813],
  [729, 987, 598, 965], [861, 988, 737, 995], [997, 986, 877, 1042], [1131, 990, 1067, 1085], [1265, 990, 1245, 1130],
];
const arrows9: A[] = [[205, -22, 240, 80], [207, 133, 256, 260], [336, 132, 440, 203], [465, 136, 593, 141]];
const arrows10: A[] = [[837, 153, 768, 250], [960, 155, 926, 298]];
const slivers: number[][] = [
  ...[[1102, 515, 1094, 433], [1236, 518, 1232, 452], [1372, 518, 1366, 455], [1505, 518, 1501, 455], [831, 820, 845, 781], [698, 972, 728, 936], [1100, 668, 1100, 637], [1367, 670, 1366, 637], [1502, 673, 1498, 637], [966, 820, 967, 802], [1100, 822, 1100, 802], [1235, 823, 1234, 800], [1367, 824, 1364, 797], [1501, 826, 1497, 803], [833, 973, 838, 962], [966, 973, 967, 964], [1099, 975, 1099, 962], [1232, 975, 1230, 955], [1365, 978, 1364, 955], [1499, 978, 1497, 965], [1089, 567, 1104, 569], [1354, 566, 1368, 571], [1482, 570, 1496, 572]].map(z7),
  ...[[65, 518, 59, 455], [199, 518, 195, 455], [330, 674, 314, 614], [60, 670, 59, 637], [195, 672, 190, 637], [60, 823, 57, 797], [195, 826, 190, 803], [461, 984, 437, 968], [327, 980, 318, 971], [60, 978, 57, 956], [194, 978, 190, 965], [47, 567, 61, 571], [175, 571, 190, 573]].map(z8),
  ...[[205, 287, 216, 307], [595, 137, 612, 130], [1241, 124, 1244, 140]].map(z9),
  ...[[692, 167, 715, 152], [455, 151, 473, 148], [576, 157, 594, 150]].map(z10),
];
const cones: number[][] = [
  ...[[1094, 416, 1094, 388], [1229, 418, 1229, 394], [1364, 420, 1364, 396], [1499, 420, 1499, 396], [858, 728, 868, 716], [755, 890, 766, 905]].map(z7),
  ...[[57, 420, 57, 396], [193, 420, 193, 396], [296, 582, 303, 558]].map(z8),
];
const dots: number[][] = [
  ...[[296, 503, 4.5], [326, 656, 3.4]].map((d) => { const q = z7([d[0], d[1], 0, 0]); return [q[0], q[1], d[2]]; }),
  ...[[728, 134], [856, 135], [985, 136], [1113, 135], [1498, 139], [468, 289], [597, 289], [726, 290], [983, 291], [1112, 290], [1240, 289], [1498, 293], [206, 440], [336, 441], [466, 442], [596, 443], [725, 443], [854, 444], [983, 446], [1112, 446], [1368, 446], [1497, 450]].map((d) => { const q = z9([d[0], d[1], 0, 0]); return [q[0], q[1], 1.500]; }),
  ...[[103, 142], [222, 145], [342, 148], [643, 200], [102, 297], [223, 300], [344, 300], [465, 302], [587, 304], [831, 311], [223, 454], [344, 454], [465, 457], [587, 457], [709, 460]].map((d) => { const q = z10([d[0], d[1], 0, 0]); return [q[0], q[1], 1.500]; }),
];

const Arrow = ({ a }: { a: number[] }) => {
  const [tx, ty, hx, hy] = a;
  const dx = hx - tx, dy = hy - ty, L = Math.hypot(dx, dy) || 1;
  const ux = dx / L, uy = dy / L, nx = -uy, ny = ux;
  const hl = L * 0.36, hw = Math.min(6.2, L * 0.125), sw = 1.700;
  const bx = hx - ux * hl, by = hy - uy * hl;
  const pt = (x: number, y: number, k: number) => `${(x + nx * k).toFixed(1)},${(y + ny * k).toFixed(1)}`;
  const shaft = `${pt(tx, ty, sw * 0.65)} ${pt(bx, by, sw)} ${pt(bx, by, -sw)} ${pt(tx, ty, -sw * 0.65)}`;
  const head = `${pt(bx, by, hw)} ${pt(hx, hy, 0)} ${pt(bx, by, -hw)}`;
  const half = `${pt(bx, by, 0)} ${pt(hx, hy, 0)} ${pt(bx, by, -hw)}`;
  return (
    <g>
      <polygon points={shaft} fill="#7a0920" />
      <polygon points={head} fill="#7f0a23" />
      <polygon points={half} fill="#9a0d2b" />
    </g>
  );
};
const Sliver = ({ a }: { a: number[] }) => {
  const [tx, ty, hx, hy] = a;
  const dx = hx - tx, dy = hy - ty, L = Math.hypot(dx, dy) || 1;
  const nx = -dy / L, ny = dx / L;
  const k = 1.100;
  return <polygon points={`${tx + nx * k},${ty + ny * k} ${hx},${hy} ${tx - nx * k},${ty - ny * k}`} fill="#8f0c28" />;
};
const Cone = ({ a }: { a: number[] }) => {
  const [tx, ty, hx, hy] = a;
  const dx = hx - tx, dy = hy - ty, L = Math.hypot(dx, dy) || 1;
  const nx = -dy / L, ny = dx / L;
  const k = 3.300;
  return <polygon points={`${tx + nx * k},${ty + ny * k} ${hx},${hy} ${tx - nx * k},${ty - ny * k}`} fill="#980d2c" />;
};

const Scene = () => {
  const poly = "613.4,365.7 1637.6,373 1634,885 609,877";
  const tick = (y: number, t: string, off = 3.500) => (
    <g key={t + y}>
      <path d={`M1737 ${y}H1749`} stroke="#f0f0f0" strokeWidth="1" />
      <text x="1755" y={y + off} fontSize="16.500" fill="#e8e8ec" fontFamily="Liberation Sans, sans-serif">{t}</text>
    </g>
  );
  return (
    <svg width="1297" height="790" viewBox="543 233 1297 790" className="absolute left-0 top-0 block">
      <defs>
        <linearGradient id="flow" gradientUnits="userSpaceOnUse" x1="1125" y1="369" x2="1121.400" y2="881">
          <stop offset="0" stopColor="#2f3f97" />
          <stop offset=".02" stopColor="#33449b" />
          <stop offset=".05" stopColor="#4c66b0" />
          <stop offset=".09" stopColor="#7b93c2" />
          <stop offset=".15" stopColor="#7a91c1" />
          <stop offset=".5" stopColor="#7089bd" />
          <stop offset=".885" stopColor="#6c86bc" />
          <stop offset=".92" stopColor="#5570b4" />
          <stop offset=".96" stopColor="#3b4ea3" />
          <stop offset="1" stopColor="#2e3d95" />
        </linearGradient>
        <linearGradient id="wallL" gradientUnits="userSpaceOnUse" x1="610" y1="0" x2="665" y2="0">
          <stop offset="0" stopColor="#6f8bc6" /><stop offset=".45" stopColor="#6f8bc6" stopOpacity=".6" /><stop offset="1" stopColor="#6f8bc6" stopOpacity="0" />
        </linearGradient>
        <linearGradient id="wallR" gradientUnits="userSpaceOnUse" x1="1638" y1="0" x2="1580" y2="0">
          <stop offset="0" stopColor="#6f8bc6" /><stop offset=".45" stopColor="#6f8bc6" stopOpacity=".6" /><stop offset="1" stopColor="#6f8bc6" stopOpacity="0" />
        </linearGradient>
        <linearGradient id="plume" gradientUnits="userSpaceOnUse" x1="0" y1="430" x2="0" y2="835">
          <stop offset="0" stopColor="#8c9dbb" stopOpacity="0" />
          <stop offset=".3" stopColor="#93a1b9" stopOpacity=".6" />
          <stop offset=".65" stopColor="#a3a7ac" stopOpacity=".9" />
          <stop offset="1" stopColor="#b4aa9c" />
        </linearGradient>
        <linearGradient id="cmap" x1="0" y1="1" x2="0" y2="0">
          <stop offset="0" stopColor="#3b4cc0" />
          <stop offset=".2" stopColor="#7f9ef2" />
          <stop offset=".35" stopColor="#b4c8fb" />
          <stop offset=".5" stopColor="#dedede" />
          <stop offset=".62" stopColor="#f4c4a9" />
          <stop offset=".78" stopColor="#ee8b66" />
          <stop offset=".9" stopColor="#cc4a3e" />
          <stop offset="1" stopColor="#a50a28" />
        </linearGradient>
        <filter id="b24" x="-60%" y="-30%" width="220%" height="160%"><feGaussianBlur stdDeviation="27" /></filter>
        <filter id="b18" x="-60%" y="-60%" width="220%" height="220%"><feGaussianBlur stdDeviation="18" /></filter>
        <filter id="b10" x="-60%" y="-60%" width="220%" height="220%"><feGaussianBlur stdDeviation="10" /></filter>
        <clipPath id="fc"><polygon points={poly} /></clipPath>
      </defs>
      <polygon points={poly} fill="url(#flow)" />
      <g clipPath="url(#fc)">
        <rect x="605" y="360" width="60" height="530" fill="url(#wallL)" />
        <rect x="1580" y="360" width="60" height="530" fill="url(#wallR)" />
        <rect x="1042" y="430" width="160" height="430" fill="url(#plume)" filter="url(#b24)" />
        <ellipse cx="1122" cy="805" rx="46" ry="42" fill="#c89a7e" opacity=".6" filter="url(#b18)" />
        <ellipse cx="1122" cy="826" rx="24" ry="24" fill="#d07f5a" opacity=".8" filter="url(#b10)" />
        <ellipse cx="1040" cy="868" rx="22" ry="22" fill="#86a0c8" opacity=".6" filter="url(#b10)" />
      </g>
      <path d="M613.400 365.700L1637.600 373" stroke="#3c4ec8" strokeWidth="1" fill="none" />
      <path d="M613.400 365.700L609 877" stroke="#9db7f2" strokeWidth="1" fill="none" />
      <path d="M1637.600 373L1634 885" stroke="#9db7f2" strokeWidth="1" fill="none" />
      <path d="M609 877L1634 885" stroke="#3c4ec8" strokeWidth="1" fill="none" />
      <polygon points="1019,881 1070,830 1224,830 1224,882" fill="#8b0820" />
      <path d="M1070 830L1224 830M1224 830V882" stroke="#c9806a" strokeWidth=".7" fill="none" />
      {arrows7.map((a, i) => <Arrow key={`a7${i}`} a={z7(a)} />)}
      {arrows8.map((a, i) => <Arrow key={`a8${i}`} a={z8(a)} />)}
      {arrows9.map((a, i) => <Arrow key={`a9${i}`} a={z9(a)} />)}
      {arrows10.map((a, i) => <Arrow key={`a10${i}`} a={z10(a)} />)}
      {slivers.map((a, i) => <Sliver key={`s${i}`} a={a} />)}
      {cones.map((a, i) => <Cone key={`c${i}`} a={a} />)}
      {dots.map((d, i) => <circle key={`d${i}`} cx={d[0]} cy={d[1]} r={d[2]} fill="#7f0a23" />)}

      {/* axes */}
      <path d="M643 924V877" stroke="#e6e640" strokeWidth="1.200" />
      <path d="M639.500 879L643 869L646.500 879z" fill="#e0d820" stroke="#8a8a20" strokeWidth=".5" />
      <path d="M646 924H688" stroke="#e62020" strokeWidth="1.200" />
      <path d="M687 920L698 924L687 928z" fill="#e01010" stroke="#7a1010" strokeWidth=".5" />
      <path d="M646 924H656" stroke="#f2f2f2" strokeWidth="1.500" />
      <ellipse cx="642.500" cy="924" rx="4.500" ry="5" fill="#0d6a1a" />
      <text x="644" y="880" fontSize="15" fill="#fff" fontFamily="Liberation Sans, sans-serif">Y</text>
      <text x="645" y="923" fontSize="15" fill="#fff" fontFamily="Liberation Sans, sans-serif">Z</text>
      <text x="689" y="925" fontSize="15" fill="#fff" fontFamily="Liberation Sans, sans-serif">X</text>

      {/* colour bars */}
      <rect x="1725" y="246" width="16" height="259" fill="url(#cmap)" />
      <rect x="1725" y="751" width="16" height="260" fill="url(#cmap)" />
      {tick(245, "3.0e+02", 5.5)}{tick(309, "301.5", 5.5)}{tick(374, "301", 5.5)}{tick(439, "300.5", 5.5)}{tick(504, "3.0e+02", 5.5)}
      {tick(751, "1.0e+00")}{tick(803, "0.8")}{tick(855, "0.6")}{tick(907, "0.4")}{tick(959, "0.2")}{tick(1011, "0.0e+00")}
      <text transform="rotate(-90 1831 374)" x="1831" y="374" fontSize="16.500" textAnchor="middle" fill="#e8e8ec" fontFamily="Liberation Sans, sans-serif">T</text>
      <text transform="rotate(-90 1832 880)" x="1832" y="880" fontSize="16.500" textAnchor="middle" fill="#e8e8ec" fontFamily="Liberation Sans, sans-serif">U_dir Magnitude</text>
    </svg>
  );
};

const WinBtn = ({ children }: { children?: React.ReactNode }) => (
  <div className="w-[22px] h-[22px] rounded-full bg-[#dcdcdc] flex items-center justify-center">{children}</div>
);
const PanelBtn = ({ children, cls }: { children?: React.ReactNode; cls: string }) => (
  <div className={`${cls} h-[24px] shrink-0 rounded-[3px] border border-[#bdbdbd] bg-linear-to-b from-[#fafafa] to-[#f0f0f0] flex items-center justify-center gap-[4px] text-[14px]`}>{children}</div>
);
const ViewBtn = ({ children }: { children?: React.ReactNode }) => (
  <div className="w-[26px] h-[25px] shrink-0 rounded-[3px] border border-[#c4c4c4] bg-[#f4f4f4] flex items-center justify-center">{children}</div>
);
const Refresh = () => (
  <svg width="16" height="16" viewBox="0 0 16 16" className="block"><path d="M2 8a6 6 0 0 1 10-4.500M14 8a6 6 0 0 1-10 4.500" fill="none" stroke="#2a8cc8" strokeWidth="2.200" /><path d="M13 0v6H8zM3 16v-6h5z" fill="#2a8cc8" /></svg>
);
const Copy = ({ dim }: { dim?: boolean }) => (
  <svg width="18" height="18" viewBox="0 0 18 18" className={`block ${dim ? "opacity-60" : ""}`}><rect x="7" y="1" width="9" height="12" fill="#bdbdbd" stroke="#999" /><rect x="2" y="5" width="9" height="12" fill="#d9d9d9" stroke="#999" /><path d="M4 8h5M4 11h5M4 14h5" stroke="#999" /></svg>
);

const MENU: [string, string, string, string][] = [
  ["w-[37.7px]", "", "F", "ile"], ["w-[41.3px]", "", "E", "dit"], ["w-[48.4px]", "", "V", "iew"], ["w-[68px]", "", "S", "ources"], ["w-[57.6px]", "Fi", "l", "ters"],
  ["w-[84px]", "E", "x", "tractors"], ["w-[51.4px]", "", "T", "ools"], ["w-[70.4px]", "", "C", "atalyst"], ["w-[63.2px]", "", "M", "acros"], ["w-[40px]", "", "H", "elp"],
];

export default function App() {
  return (
    <div className="w-[1840px] h-[1023px] overflow-hidden flex flex-col bg-[#efefef] font-['Noto_Sans',sans-serif] text-[14px] text-[#111]">
      {/* title bar */}
      <div className="h-[36px] shrink-0 bg-[#ebebeb] border-b border-[#b9b9b9] flex items-center relative">
        <div className="flex-1 text-center font-bold text-[14px] text-[#3b3b3b]">ParaView 5.10.1</div>
        <div className="absolute right-[1px] top-[6px] flex gap-[12px]">
          <WinBtn><div className="w-[8px] h-[1.500px] bg-[#333] mt-[3px]" /></WinBtn>
          <WinBtn><div className="w-[7px] h-[7px] border border-[#333]" /></WinBtn>
          <WinBtn><span className="text-[13px] leading-none text-[#333]">✕</span></WinBtn>
        </div>
      </div>
      {/* menu */}
      <div className="h-[21px] shrink-0 flex items-center pl-[7px] text-[14.500px] text-[#111]">
        {MENU.map(([w, a, u, b]) => (
          <div key={u + b} className={`${w} shrink-0 whitespace-nowrap`}>{a}<span className="underline">{u}</span>{b}</div>
        ))}
      </div>
      {/* toolbar 1 */}
      <div className="h-[40px] shrink-0 border-t border-b border-t-[#d8d8d8] border-b-[#b9b9b9] bg-linear-to-b from-[#f9f9f9] to-[#f1f1f1] flex items-center">
        <Grip />
        <S32><OpenI /></S32><S32><LoadI /></S32><S32><SaveI /></S32><S32><CamI /></S32><S32><FlaskI /></S32>
        <Sep />
        <S32><ConnI /></S32><S32><ConnI bad /></S32><S32><TimerI /></S32>
        <Sep />
        <S32><UndoI /></S32><S32><UndoI flip c="#cfcfcf" /></S32>
        <Sep />
        <S32><FindI /></S32><S32><RescaleI /></S32><S32><PaletteI /></S32>
        <Grip cls="w-[17px]" />
        <S32><VC k="first" /></S32><S32><VC k="prev" /></S32><S32><VC k="play" /></S32><S32><VC k="next" /></S32><S32><VC k="last" /></S32><S32><VC k="loop" /></S32>
        <Grip cls="w-[17px]" />
        <span className="w-[40px] shrink-0">Time:</span>
        <Combo text="200" cls="w-[61px]" />
        <div className="w-[43px] h-[24px] ml-[3px] shrink-0 rounded-[3px] border border-[#b7b7b7] bg-white flex overflow-hidden">
          <span className="flex-1 pl-[4px] leading-[22px]">1</span>
          <div className="w-[13px] border-l border-[#b7b7b7] bg-[#f4f4f4] flex flex-col items-center justify-center gap-[3px]">
            <span className="w-0 h-0 border-x-[3px] border-x-transparent border-b-[4px] border-b-[#444]" />
            <span className="w-0 h-0 border-x-[3px] border-x-transparent border-t-[4px] border-t-[#444]" />
          </div>
        </div>
        <span className="ml-[3px] w-[66px] shrink-0 whitespace-nowrap">max is 10</span>
        <Grip cls="w-[14px]" />
        <S32><SearchCam /></S32><S32><SearchCam plus /></S32>
      </div>
      {/* toolbar 2 */}
      <div className="h-[38px] shrink-0 border-b border-[#b9b9b9] bg-linear-to-b from-[#f9f9f9] to-[#f0f0f0] flex items-center pt-[1px]">
        <Grip />
        <S32 on><BarI /></S32><S32><BarBallI /></S32><S32><LinkI /></S32>
        <S32><RulerI /></S32><S32><RulerI t="c" /></S32><S32><RulerI t="t" /></S32><S32><RulerI t="eye" /></S32>
        <Combo text="U_dir" dot cls="w-[183px]" />
        <div className="w-[5px] shrink-0" />
        <Combo text="Magnitude" cls="w-[85px]" textCls="w-[60px] shrink-0" />
        <Grip cls="w-[18px]" />
        <Combo text="Surface" cls="w-[162px]" />
        <Grip cls="w-[19px]" />
        <S32><ResetI k={0} /></S32><S32><ResetI k={1} /></S32><S32><ResetI k={2} /></S32><S32><ResetI k={3} /></S32><S32><ZoomBoxI /></S32>
        <S32><AxisI label="+X" right up={G} sq={R} side={Y} /></S32>
        <S32><AxisI label="-X" up={G} sq={R} side={Y} /></S32>
        <S32><AxisI label="+Y" up={Y} sq={Y} side={R} /></S32>
        <S32><AxisI label="-Y" right up={G} sq={Y} side={R} /></S32>
        <S32><AxisI label="+Z" right up={Y} sq={G} side={R} /></S32>
        <S32><AxisI label="-Z" up={Y} sq={G} side={R} /></S32>
        <S32><RotI plus /></S32>
        <S32><RotI /></S32>
        <Grip cls="w-[15px]" />
        <S32 on><AxEyeI /></S32><S32><CenterI k={0} /></S32><S32><CenterI k={1} /></S32><S32><CenterI k={2} /></S32>
        <Grip cls="w-[21px]" />
      </div>
      {/* toolbar 3 */}
      <div className="h-[38px] shrink-0 border-b border-[#b9b9b9] bg-linear-to-b from-[#f9f9f9] to-[#f0f0f0] flex items-center">
        <Grip />
        <S33><CalcI /></S33><S33><ContourI /></S33><S33><ClipI /></S33><S33><SliceI /></S33><S33><ThreshI /></S33><S33><ExtractI /></S33><S33><GlyphNetI /></S33><S33><StreamI /></S33><S33><WarpI /></S33><S33><GroupI /></S33><S33><UngroupI /></S33>
        <Grip cls="w-[18px]" />
        <S33><PlotOverI /></S33><S33><SelI /></S33><S33><HistI /></S33><S33><TimeBallI /></S33><S33><LineHistI /></S33><S33><TimeSelI /></S33><S33><IceI /></S33><S33><BraceI /></S33>
        <Grip cls="w-[16px]" />
        <S33><RulerMeasI /></S33>
      </div>
      {/* main */}
      <div className="flex-1 min-h-0 flex">
        {/* left dock */}
        <div className="w-[533px] shrink-0 flex flex-col">
          <div className="h-[21px] shrink-0 flex items-center justify-between pr-[2px]">
            <span className="leading-[20px] text-[14px] text-[#1c1c1c] pt-[1px]">Pipeline Browser</span><Float />
          </div>
          <div className="h-[287px] shrink-0 bg-white border border-l-0 border-[#b9b9b9] pt-[2px] relative">
            <div className="absolute left-[62px] top-0 w-px h-[115px] bg-[#8f8f8f]" />
            <div className="relative">
              <TreeRow name="builtin:" srv />
              <TreeRow name="hotRoom.OpenFOAM" eye="off" />
              <TreeRow name="Slice1" eye="on" />
              <TreeRow name="Threshold1" eye="off" />
              <TreeRow name="Calculator1" eye="off" />
              <TreeRow name="Glyph1" eye="on" sel />
            </div>
          </div>
          <div className="h-[8px] shrink-0 flex justify-center items-center"><div className="w-[16px] border-t border-dotted border-[#bbb]" /></div>
          <div className="h-[26px] shrink-0 flex items-end border-b border-[#bcbcbc]">
            <div className="w-[93px] h-[27px] -mb-px rounded-t-[3px] border border-b-0 border-l-0 border-[#c4c4c4] bg-[#f2f2f2] flex items-center pl-[8px] text-[14.200px]">Properties</div>
            <div className="w-[104px] h-[25px] rounded-t-[3px] border border-b-0 border-l-0 border-[#c4c4c4] bg-[#dfdfdf] flex items-center justify-center pt-[2px]">Information</div>
          </div>
          <div className="h-[30px] shrink-0 flex items-start justify-between pr-[2px] pt-[2px]">
            <span className="leading-[20px] text-[14px] text-[#1c1c1c]">Properties</span><div className="pt-[4px]"><Float /></div>
          </div>
          <div className="h-[24px] shrink-0 flex gap-[3px] pl-[5px]">
            <PanelBtn cls="w-[127px] text-[#b8b8b8] pr-[2px]">
              <svg width="14" height="14" viewBox="0 0 14 14" className="block"><path d="M1 5l5-2 3 2v8l-5 1-3-2z" fill="#bbb" /><path d="M8 4l3-3 2 3z" fill="#bbb" /></svg>Apply
            </PanelBtn>
            <PanelBtn cls="w-[128px] text-[#b8b8b8]">
              <svg width="14" height="14" viewBox="0 0 14 14" className="block"><circle cx="7" cy="7" r="5.500" fill="none" stroke="#aaa" strokeWidth="2.200" /><path d="M3.500 10.500l7-7" stroke="#aaa" strokeWidth="2.200" /></svg>Reset
            </PanelBtn>
            <PanelBtn cls="w-[127px]">
              <svg width="12" height="12" viewBox="0 0 12 12" className="block"><path d="M2 2l8 8m0-8l-8 8" stroke="#e2202a" strokeWidth="3.600" /></svg>Delete
            </PanelBtn>
            <PanelBtn cls="w-[127px] text-[#9fbf7f] font-bold text-[16px]">?</PanelBtn>
          </div>
          <div className="h-[23px] mt-[8px] shrink-0 flex gap-[3px] pl-[5px]">
            <div className="w-[492px] h-[23px] rounded-[3px] border border-[#b7b7b7] bg-white pl-[2px] leading-[21px] text-[#8a8a8a]">Search ... (use Esc to clear text)</div>
            <SmallBtn cls="w-[23px] !h-[23px]">
              <svg width="15" height="15" viewBox="0 0 15 15" className="block"><circle cx="7.500" cy="7.500" r="4" fill="none" stroke="#bbb" strokeWidth="2.500" /><circle cx="7.500" cy="7.500" r="6" fill="none" stroke="#bbb" strokeWidth="1.800" strokeDasharray="2 2" /></svg>
            </SmallBtn>
          </div>
          {/* scroll panel */}
          <div className="h-[411px] mt-[8px] shrink-0 flex pl-[5px] overflow-hidden">
            <div className="w-[505px] shrink-0 border-t border-[#b0b0b0] flex flex-col">
              <div className="flex mt-[6px]"><Label>Orientation Array</Label><Combo text="U_dir" dot cls="w-[373px]" /></div>
              <Head text="Scale" cls="h-[27px]" />
              <div className="flex mt-[6px]"><Label>Scale Array</Label><Combo text="U_dir" dot cls="w-[373px]" /></div>
              <div className="flex mt-[6px]"><Label>Vector Scale Mode</Label><Combo text="Scale by Magnitude" cls="w-[373px]" /></div>
              <div className="flex mt-[5px]">
                <Label>Scale Factor</Label>
                <div className="w-[154px] h-[24px] shrink-0 flex items-center ml-[1px] relative">
                  <div className="w-[74px] h-[4px] rounded-l-full bg-[#3d9ad4]" />
                  <div className="flex-1 h-[4px] rounded-r-full bg-[#d6d6d6] border-y border-r border-[#c2c2c2]" />
                  <div className="absolute left-[72px] top-[6px] w-[12px] h-[13px] rounded-[3px] border border-[#bdbdbd] bg-[#fafafa]" />
                </div>
                <Field text="0.5" cls="w-[155px] ml-[6px]" />
                <SmallBtn cls="w-[23px] ml-[6px]"><span className="text-[12px] font-bold leading-none">✕</span></SmallBtn>
                <SmallBtn cls="w-[23px] ml-[4px]"><Refresh /></SmallBtn>
              </div>
              <Head text="Masking" cls="h-[26px]" />
              <div className="flex mt-[6px]"><Label>Glyph Mode</Label><Combo text="Uniform Spatial Distribution (Bounds Based)" cls="w-[373px]" /></div>
              <div className="flex mt-[9px] h-[24px]">
                <div className="w-[131px] shrink-0 -mt-[4px] text-[14px] leading-[17px] text-[#1c1c1c] whitespace-nowrap">Maximum Number<br />Of Sample Points</div>
                <Field text="500" cls="w-[373px]" />
              </div>
              <div className="flex mt-[11px]"><Label>Seed</Label><Field text="10339" cls="w-[373px]" /></div>
              <div className="flex mt-[6px]">
                <div className="w-[377px] h-[27px] shrink-0 border border-[#c2c2c2] flex items-center pl-[11px] gap-[7px] font-bold">
                  <div className="w-[14px] h-[4px] rounded-[1px] bg-[#2e8fc9]" />Display (GeometryRepresentation)
                </div>
                <div className="flex gap-[5px] ml-[4px] mt-[2px]">
                  <SmallBtn><Copy /></SmallBtn>
                  <SmallBtn><Copy dim /></SmallBtn>
                  <SmallBtn><Refresh /></SmallBtn>
                  <SmallBtn>
                    <svg width="14" height="18" viewBox="0 0 14 18" className="block"><path d="M4 1h6v7h3l-6 7-6-7h3z" fill="#b5cf4f" stroke="#7a9a30" strokeWidth=".7" /><path d="M1 17h12" stroke="#7a9a30" /></svg>
                  </SmallBtn>
                </div>
              </div>
              <div className="flex mt-[6px]"><Label cls="w-[110px]">Representation</Label><Combo text="Surface" cls="w-[394px]" /></div>
              <Head text="Coloring" cls="h-[28px]" />
              <div className="flex mt-[6px] gap-[5px]"><Combo text="U_dir" dot cls="w-[234px]" /><Combo text="Magnitude" cls="w-[233px]" /></div>
              <div className="flex mt-[5px] gap-[5px] [&_svg]:w-[18px] [&_svg]:h-[18px]">
                <PanelBtn cls="w-[280px] !items-start pt-[1px]"><BarBallI /><span className="leading-[20px]">Edit</span></PanelBtn>
                <SmallBtn><LinkI /></SmallBtn><SmallBtn><RulerI /></SmallBtn><SmallBtn><RulerI t="c" /></SmallBtn><SmallBtn><RulerI t="t" /></SmallBtn><SmallBtn><PaletteI /></SmallBtn>
                <SmallBtn cls="w-[27px] !bg-none bg-[#dcdcdc]"><BarI /></SmallBtn><SmallBtn><LinkI /></SmallBtn>
              </div>
            </div>
            <div className="w-[14px] shrink-0 flex flex-col bg-[#e6e6e6]">
              <div className="h-[12px] shrink-0 bg-[#f0f0f0] flex items-center justify-center"><span className="w-0 h-0 border-x-[4px] border-x-transparent border-b-[4px] border-b-[#333]" /></div>
              <div className="h-[43px] shrink-0" />
              <div className="h-[154px] shrink-0 bg-[#f0f0f0]" />
              <div className="flex-1" />
              <div className="h-[12px] shrink-0 bg-[#f0f0f0] flex items-center justify-center"><span className="w-0 h-0 border-x-[4px] border-x-transparent border-t-[4px] border-t-[#333]" /></div>
            </div>
          </div>
          <div className="flex-1 bg-[#f6f6f6]" />
        </div>
        <div className="w-[7px] shrink-0" />
        {/* right */}
        <div className="flex-1 min-w-0 flex flex-col">
          <div className="h-[31px] shrink-0 border-b border-[#b9b9b9] flex items-end">
            <div className="w-[128px] h-[30px] -mb-px rounded-t-[3px] border border-b-0 border-[#c4c4c4] bg-[#f8f8f8] flex items-center pl-[10px]">
              <div className="w-[16px] h-[16px] border-2 border-t-[4px] border-[#333] bg-white shrink-0" />
              <span className="ml-[6px] whitespace-nowrap">Layout #1</span>
              <div className="ml-[5px] w-[11px] h-[11px] rounded-[2px] border border-[#777] text-[9px] leading-none flex items-center justify-center">✕</div>
            </div>
            <div className="w-[31px] h-[27px] rounded-t-[3px] border border-b-0 border-l-0 border-[#c4c4c4] bg-[#efefef] flex items-center justify-center text-[15px]">+</div>
          </div>
          <div className="h-[26px] shrink-0 bg-[#f5f5f5] flex items-center">
            <V26 k="a" /><V26 k="b" /><Sep /><V26 k="c" /><Sep />
            <div className="w-[26px] shrink-0 text-center font-bold text-[12px] text-[#6e6e57]">2D</div>
            <V26 k="e" /><Sep /><V26 k="plus" /><V26 k="minus" /><V26 k="pm" /><Sep />
            <V26 k="t1" /><V26 k="t2" /><V26 k="t3" /><V26 k="t4" /><V26 k="t5" /><V26 k="t6" /><V26 k="t7" /><V26 k="t8" />
            <V26 k="p1" /><V26 k="p2" /><V26 k="p3" /><V26 k="q1" /><V26 k="q2" /><V26 k="g+" /><V26 k="g-" /><V26 k="no" />
            <div className="ml-auto flex items-center -mr-[3px]">
              <span className="font-bold text-[14.300px] underline mr-[12px] text-black">RenderView1</span>
              <div className="flex gap-[1px]">
                <ViewBtn><div className="w-[14px] h-[15px] bg-[#ccd5ec] border border-[#a8a8b8] flex justify-center"><div className="w-px h-full bg-[#8a8a9a]" /></div></ViewBtn>
                <ViewBtn><div className="w-[14px] h-[15px] bg-[#ccd5ec] border border-[#a8a8b8] flex items-center"><div className="h-px w-full bg-[#8a8a9a]" /></div></ViewBtn>
                <ViewBtn><div className="w-[18px] h-[19px] border-2 border-t-[4px] border-[#333] bg-white" /></ViewBtn>
                <ViewBtn><div className="w-[11px] h-[11px] rounded-[2px] border border-[#666] text-[9px] leading-none flex items-center justify-center">✕</div></ViewBtn>
              </div>
            </div>
          </div>
          <div className="flex-1 min-h-0 border-t-2 border-l-2 border-[#0000ee]">
            <div className="h-full border-t border-l border-[#cfd2e0] bg-[#52576e] relative overflow-hidden">
              <Scene />
            </div>
          </div>
        </div>
      </div>
    </div>
  );
}
